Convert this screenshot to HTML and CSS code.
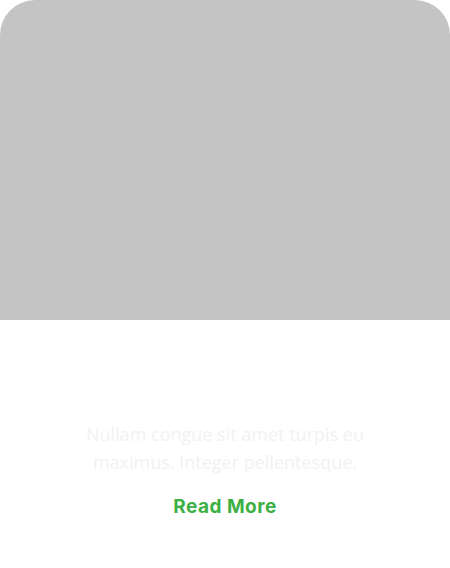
FILE: index.html
```html
<!DOCTYPE html>
<html>
<head>
<meta charset="utf-8">
<link rel="stylesheet" href="styles.css">
</head>
<body>
<div class="card">
  <div class="media"></div>
  <div class="content">
    <h3 class="title">Blog Post Title</h3>
    <p class="excerpt">Nullam congue sit amet turpis eu maximus. Integer pellentesque.</p>
    <a class="more" href="#">Read More</a>
  </div>
</div>
</body>
</html>
```
FILE: styles.css
```css
html, body {
  margin: 0;
  padding: 0;
  background: #ffffff;
}
.card {
  width: 450px;
  display: flex;
  flex-direction: column;
}
.media {
  height: 320px;
  background: #c4c4c4;
  border-radius: 35px 35px 0 0;
}
.content {
  display: flex;
  flex-direction: column;
  align-items: center;
  padding: 0 60px;
}
.title {
  margin: 40px 0 0;
  height: 60px;
  color: #ffffff;
  font-family: "Open Sans", sans-serif;
  font-size: 24px;
}
.excerpt {
  margin: 0;
  font-family: "Open Sans", sans-serif;
  font-size: 18px;
  line-height: 28px;
  color: #f2f2f2;
  text-align: center;
}
.more {
  margin-top: 19px;
  font-family: Inter, Roboto, sans-serif;
  font-weight: 700;
  font-size: 19px;
  letter-spacing: 0.5px;
  line-height: 24px;
  color: #3cb043;
  text-decoration: none;
}
```
